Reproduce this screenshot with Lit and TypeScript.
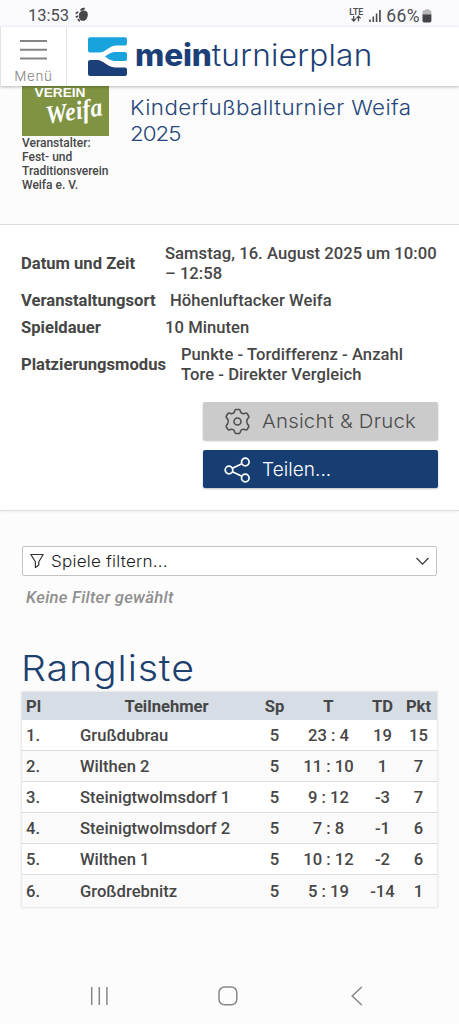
import { LitElement, html, css, svg } from "lit";
import { customElement } from "lit/decorators.js";

interface Standing {
  place: string;
  team: string;
  played: string;
  goals: string;
  diff: string;
  points: string;
}

const STANDINGS: Standing[] = [
  { place: "1.", team: "Grußdubrau", played: "5", goals: "23 : 4", diff: "19", points: "15" },
  { place: "2.", team: "Wilthen 2", played: "5", goals: "11 : 10", diff: "1", points: "7" },
  { place: "3.", team: "Steinigtwolmsdorf 1", played: "5", goals: "9 : 12", diff: "-3", points: "7" },
  { place: "4.", team: "Steinigtwolmsdorf 2", played: "5", goals: "7 : 8", diff: "-1", points: "6" },
  { place: "5.", team: "Wilthen 1", played: "5", goals: "10 : 12", diff: "-2", points: "6" },
  { place: "6.", team: "Großdrebnitz", played: "5", goals: "5 : 19", diff: "-14", points: "1" },
];

@customElement("status-bar")
class StatusBar extends LitElement {
  static styles = css`
    :host { display: block; flex: none; }
    .bar { height: 27px; box-sizing: border-box; padding: 5px 27px 0 28px; background: #fafafe; display: flex; align-items: center; color: #4c4c50; font: 16.5px/22px Roboto, sans-serif; }
    .time { width: 42px; letter-spacing: 0; }
    .fruit { margin-left: 5px; margin-top: -2px; }
    .right { margin-left: auto; display: flex; align-items: center; }
    .lte { margin-right: 5px; margin-top: -2px; }
    .signal { margin-right: 5px; margin-top: -2px; }
    .percent { letter-spacing: 0.4px; font-size: 17.5px; }
    .battery { margin-left: 2px; }
    svg { display: block; }
  `;
  render() {
    return html`<div class="bar">
      <span class="time">13:53</span>
      <svg class="fruit" width="14" height="16" viewBox="0 0 14 16" fill="#47474b">
        <path d="M6.5 4.2C8 3.2 12.5 3 12.8 7c.3 3.600-2.300 7.300-4.500 6.800C5.200 14.400 3.500 11 4 7.500c.2-1.700 1.100-2.800 2.500-3.300Z" />
        <path d="M5 3.500C5.600 1.200 7.600.2 10 1c-.2 2-2 3.200-5 2.500Z" />
        <path d="M.6 5.500 3.200 4.200l.3 1.600-2.700 1.600ZM.4 9.200l2.700-1 .2 1.800L1.400 11ZM2.200 12.500l1.700-1 1.300 2.200-1 1.200Z" />
      </svg>
      <div class="right">
        <svg class="lte" width="15" height="16" viewBox="0 0 15 16">
          <text x="0.300" y="7.600" font-family="Roboto" font-size="9" font-weight="600" fill="#4c4c50" textLength="14" lengthAdjust="spacingAndGlyphs">LTE</text>
          <path d="M4.700 9v4.800M2.600 11.800l2.100 2.200 2.100-2.200M9.500 14.300V9.500M7.400 11.400l2.100-2.200 2.100 2.200" fill="none" stroke="#4c4c50" stroke-width="1.300" />
        </svg>
        <svg class="signal" width="12" height="13" viewBox="0 0 12 13" fill="#4c4c50">
          <path d="M.2 10.500h1.600V13H.2zM3.500 7.500h1.600V13H3.500zM6.800 4.500h1.600V13H6.800zM10.100 1h1.700v12h-1.700z" />
        </svg>
        <span class="percent">66%</span>
        <svg class="battery" width="10" height="14" viewBox="0 0 10 14">
          <path d="M3 1.200q0-.9.900-.9h2.300q.9 0 .9.900h.7q1.600 0 1.600 1.600V6H.5V2.800q0-1.600 1.600-1.600Z" fill="#b5b5b9" />
          <path d="M.5 5.500h8.900v6.300q0 1.600-1.600 1.600H2.100q-1.600 0-1.600-1.600Z" fill="#444448" />
        </svg>
      </div>
    </div>`;
  }
}

@customElement("site-header")
class SiteHeader extends LitElement {
  static styles = css`
    :host { display: block; flex: none; position: relative; z-index: 2; }
    .bar { height: 59px; display: flex; background: #fff; box-shadow: 0 1px 3px rgba(0, 0, 0, 0.28); }
    .menu { width: 67px; box-sizing: border-box; border-left: 1px solid #e2e2e2; border-right: 1px solid #e4e4e4; padding-top: 13px; display: flex; flex-direction: column; align-items: center; color: #858585; }
    .menu span { font: 350 13.500px/16px Inter, sans-serif; letter-spacing: 0.6px; margin-top: 8px; white-space: nowrap; }
    .brand { display: flex; padding: 10px 0 0 21px; }
    .word { margin-left: 8px; font: 350 30px/36px Inter, sans-serif; color: #1d3f77; white-space: nowrap; display: flex; transform: scaleX(1.053); transform-origin: 0 0; }
    .bold { font-weight: 800; letter-spacing: -0.150px; }
    .thin { letter-spacing: 0.250px; }
    svg { display: block; }
  `;
  render() {
    return html`<div class="bar">
      <div class="menu">
        <svg width="27" height="20" viewBox="0 0 27 20" fill="#858585">
          <path d="M0 0h27v1.900H0zM0 8.800h27v1.900H0zM0 17.500h27v1.900H0z" />
        </svg>
        <span>Menü</span>
      </div>
      <div class="brand">
        <svg width="39" height="39" viewBox="0 0 39 39">
          <path d="M2 .2H37q2 0 2 2V6.600Q39 8.600 37 8.600H28.500C21 8.600 18 15.600 11 15.600H2Q0 15.600 0 13.600V2.200Q0 .2 2 .2Z" fill="#18a3dd" />
          <path d="M37 15Q39 15 39 17V22Q39 24 37 24H28C22.500 24 20 21.500 17 19.500C20 17.500 22.500 15 28 15Z" fill="#18a3dd" />
          <path d="M0 25Q0 23 2 23H9C15.500 23 19.500 30.400 27 30.400H37Q39 30.400 39 32.400V37Q39 39 37 39H2Q0 39 0 37Z" fill="#1b3f78" />
        </svg>
        <div class="word"><span class="bold">mein</span><span class="thin">turnierplan</span></div>
      </div>
    </div>`;
  }
}

@customElement("event-intro")
class EventIntro extends LitElement {
  static styles = css`
    :host { display: block; flex: none; }
    .intro { height: 138px; display: flex; padding: 0 22px; box-sizing: border-box; background: #fcfcfc; }
    .club { width: 109px; flex: none; }
    .badge { display: block; overflow: visible; }
    .host-text { margin: 0; font: 500 12px/14px Roboto, sans-serif; color: #474747; white-space: nowrap; }
    .title { margin: 9px 0 0 -1px; font: 350 20.500px/26px Inter, sans-serif; letter-spacing: 0.380px; color: #24467a; white-space: nowrap; transform: scaleX(1.089); transform-origin: 0 0; }
    .year { letter-spacing: -0.900px; }
  `;
  render() {
    return html`<div class="intro">
      <div class="club">
        <svg class="badge" width="87" height="50" viewBox="0 0 87 50">
          <rect width="87" height="50" fill="#7f9343" />
          <text x="12.500" y="10.800" font-family="Liberation Sans" font-weight="700" font-size="13" fill="#fff" textLength="51" lengthAdjust="spacingAndGlyphs">VEREIN</text>
          <text transform="translate(25 38) rotate(-9)" font-family="Liberation Serif" font-style="italic" font-weight="700" font-size="26" fill="#fff" textLength="57" lengthAdjust="spacingAndGlyphs">Weifa</text>
        </svg>
        <p class="host-text">Veranstalter:<br />Fest- und<br />Traditionsverein<br />Weifa e. V.</p>
      </div>
      <h1 class="title">Kinderfußballturnier Weifa<br /><span class="year">2025</span></h1>
    </div>`;
  }
}

@customElement("event-details")
class EventDetails extends LitElement {
  static styles = css`
    :host { display: block; flex: none; }
    .panel { height: 287px; box-sizing: border-box; padding: 19px 21px 0; border-top: 1px solid #dedede; border-bottom: 1px solid #dedede; background: #fff; box-shadow: 0 1px 2px rgba(0, 0, 0, 0.05); font: 500 16.600px/20px Roboto, sans-serif; letter-spacing: 0.050px; color: #464646; }
    .row { display: flex; align-items: center; white-space: nowrap; margin-bottom: 7px; }
    .label { font-weight: 700; letter-spacing: 0; min-width: 144px; }
    .near { padding-left: 5px; }
    .far { padding-left: 15px; }
    .actions { display: flex; flex-direction: column; gap: 10px; margin: 17px 0 0 182px; width: 235px; }
    .button { height: 38px; display: flex; align-items: center; padding-left: 21px; gap: 11px; box-sizing: border-box; border-radius: 2px; font: 350 19px/38px Inter, sans-serif; box-shadow: 0 1px 2px rgba(0, 0, 0, 0.25); white-space: nowrap; }
    .button span { padding-top: 1px; }
    .grey { background: #cbcbcb; color: #4c4c4c; }
    .grey span { letter-spacing: 0.200px; transform: scaleX(1.073); transform-origin: 0 0; }
    .blue { background: #163e73; color: #fff; }
  `;
  render() {
    return html`<section class="panel">
      <div class="row"><span class="label">Datum und Zeit</span><span>Samstag, 16. August 2025 um 10:00<br />– 12:58</span></div>
      <div class="row"><span class="label">Veranstaltungsort</span><span class="near">Höhenluftacker Weifa</span></div>
      <div class="row"><span class="label">Spieldauer</span><span>10 Minuten</span></div>
      <div class="row"><span class="label">Platzierungsmodus</span><span class="far">Punkte - Tordifferenz - Anzahl<br />Tore - Direkter Vergleich</span></div>
      <div class="actions">
        <div class="button grey">
          <svg width="27" height="27" viewBox="0 0 27 27" fill="none" stroke="#505050" stroke-width="1.600" stroke-linejoin="round">
            <path d="M10.300 4.300Q10.900 1.500 11.800 1.500H15.200Q16.100 1.500 16.700 4.300Q17.900 6 19.700 5.700Q22.400 4.600 23 5.400L24.900 8.500Q25.300 9.300 23.300 11.200Q22 13.500 23.300 15.800Q25.300 17.700 24.900 18.500L23 21.600Q22.400 22.400 19.700 21.300Q17.900 21 16.700 22.700Q16.100 25.500 15.200 25.500H11.800Q10.900 25.500 10.300 22.700Q9.100 21 7.300 21.300Q4.600 22.400 4 21.600L2.100 18.500Q1.700 17.700 3.700 15.800Q5 13.500 3.700 11.200Q1.700 9.300 2.100 8.500L4 5.400Q4.600 4.600 7.300 5.700Q9.100 6 10.300 4.300Z" />
            <circle cx="13.500" cy="13.500" r="3.500" />
          </svg>
          <span>Ansicht &amp; Druck</span>
        </div>
        <div class="button blue">
          <svg width="27" height="27" viewBox="0 0 27 27" fill="none" stroke="#fff" stroke-width="1.700">
            <circle cx="5" cy="14" r="3.800" /><circle cx="21.300" cy="6" r="3.800" /><circle cx="21.300" cy="22" r="3.800" />
            <path d="M8.400 12.300 17.900 7.700M8.400 15.700 17.900 20.300" />
          </svg>
          <span>Teilen...</span>
        </div>
      </div>
    </section>`;
  }
}

@customElement("game-filter")
class GameFilter extends LitElement {
  static styles = css`
    :host { display: block; flex: none; padding: 35px 22px 0; }
    .select { height: 30px; box-sizing: border-box; display: flex; align-items: center; padding: 0 7px 0 7px; border: 1px solid #c4c4c4; border-radius: 2px; background: #fff; color: #1c1c1c; font: 350 16px/28px Inter, sans-serif; white-space: nowrap; }
    .text { margin-left: 7px; letter-spacing: 0.200px; transform: scaleX(1.065); transform-origin: 0 0; }
    .chevron { margin-left: auto; }
    .hint { margin: 12px 0 0 4px; font: italic 500 16.600px/20px Roboto, sans-serif; letter-spacing: 0.280px; color: #8e8e8e; }
  `;
  render() {
    return html`<div class="select">
        <svg width="14" height="16" viewBox="0 0 14 16" fill="none" stroke="#333" stroke-width="1.200" stroke-linejoin="round"><path d="M.8 1.500H13.200L8.800 8.700V12L5.400 14.500V8.700Z" /></svg>
        <span class="text">Spiele filtern...</span>
        <svg class="chevron" width="13" height="10" viewBox="0 0 13 10" fill="none" stroke="#333" stroke-width="1.200"><path d="M.5 2 6.500 8.200 12.500 2" /></svg>
      </div>
      <p class="hint">Keine Filter gewählt</p>`;
  }
}

@customElement("ranking-table")
class RankingTable extends LitElement {
  static styles = css`
    :host { display: block; flex: none; padding: 36px 22px 0; }
    .heading { margin: 0 0 0 -1px; height: 48px; font: 300 36px/48px Inter, sans-serif; letter-spacing: 0.800px; color: #1d406f; white-space: nowrap; transform: scaleX(1.092); transform-origin: 0 0; }
    .table { box-shadow: 0 0 2px 1px rgba(0, 0, 0, 0.1); font: 500 16.600px/20px Roboto, sans-serif; color: #464646; }
    .row { display: grid; grid-template-columns: 54px 181px 35px 73px 35px 37px; align-items: center; height: 31.100px; box-sizing: border-box; padding-top: 2px; border-bottom: 1px solid #dcdcdc; background: #fff; text-align: center; white-space: nowrap; }
    .row:nth-child(odd) { background: #fafafa; }
    .row:last-child { border-bottom-color: transparent; }
    .row.head { height: 28px; border: 0; background: #d6dde5; font-weight: 700; }
    .left { text-align: left; padding-left: 4px; }
  `;
  render() {
    return html`<h2 class="heading">Rangliste</h2>
      <div class="table">
        <div class="row head"><span class="left">Pl</span><span>Teilnehmer</span><span>Sp</span><span>T</span><span>TD</span><span>Pkt</span></div>
        ${STANDINGS.map(
          (s) => html`<div class="row"><span class="left">${s.place}</span><span class="left">${s.team}</span><span>${s.played}</span><span>${s.goals}</span><span>${s.diff}</span><span>${s.points}</span></div>`
        )}
      </div>`;
  }
}

@customElement("nav-keys")
class NavKeys extends LitElement {
  static styles = css`
    :host { display: block; flex: none; margin-top: auto; }
    .keys { height: 56px; display: grid; grid-template-columns: 128px 133px 12px; align-items: center; padding-left: 90px; }
  `;
  render() {
    const icon = (w: number, shape: unknown) =>
      html`<svg width=${w} height="20" viewBox="0 0 ${w} 20" fill="none" stroke="#878787" stroke-width="1.500">${shape}</svg>`;
    return html`<div class="keys">
      ${icon(19, svg`<path d="M1.700 1v18M9.300 1v18M16.900 1v18" />`)}
      ${icon(20, svg`<rect x="1" y="1" width="17.800" height="17.800" rx="5.500" />`)}
      ${icon(12, svg`<path d="M10.800 1 1.200 10 10.800 19" />`)}
    </div>`;
  }
}

@customElement("app-root")
class AppRoot extends LitElement {
  static styles = css`
    :host { display: flex; flex-direction: column; width: 459px; height: 1024px; overflow: hidden; background: #fcfcfc; }
  `;
  render() {
    return html`<status-bar></status-bar><site-header></site-header><event-intro></event-intro><event-details></event-details><game-filter></game-filter><ranking-table></ranking-table><nav-keys></nav-keys>`;
  }
}
